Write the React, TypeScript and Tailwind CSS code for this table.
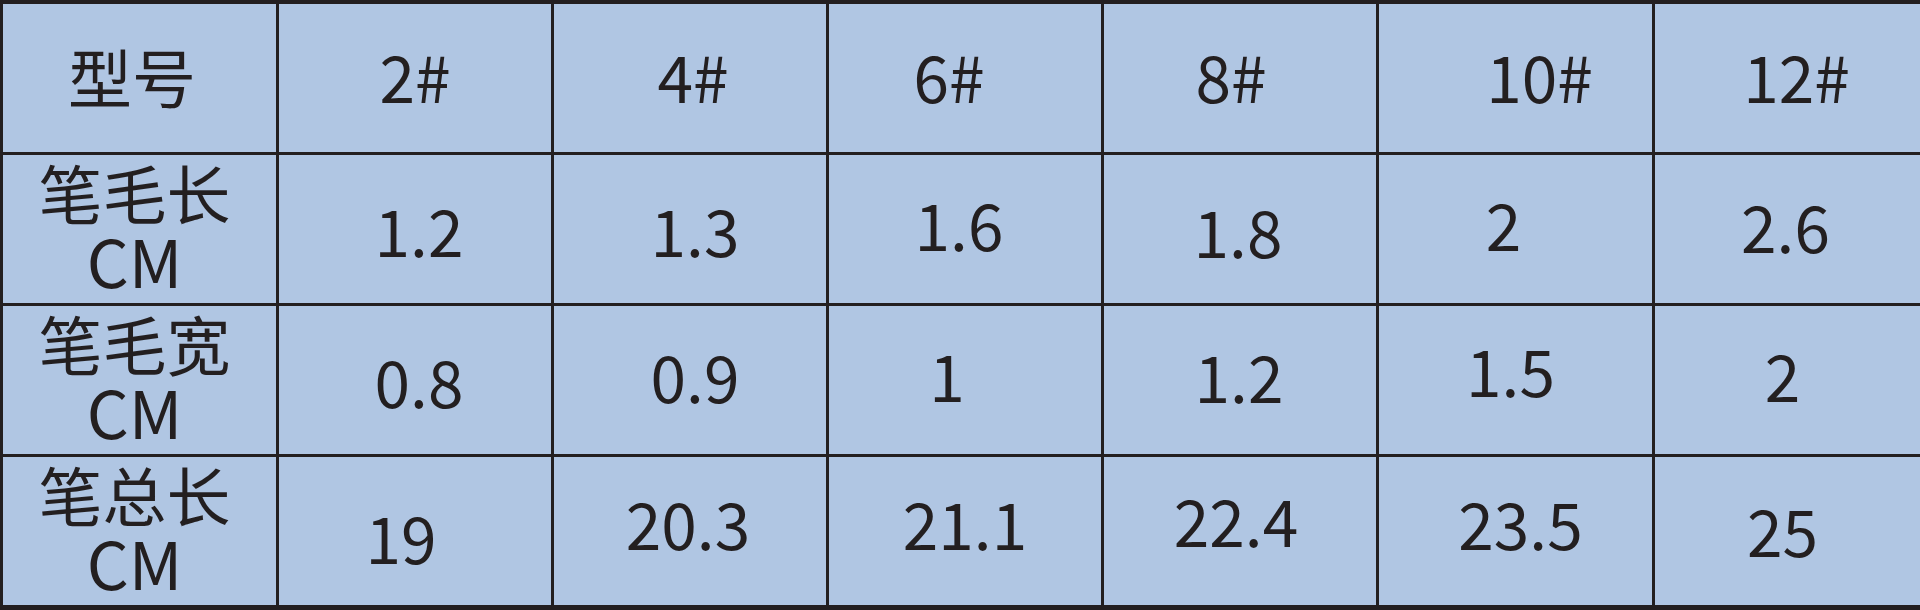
const font = "font-['Noto_Sans_CJK_SC','Noto_Sans',sans-serif]";

type Cell = { t: string; label?: boolean; c?: string };

// 每格文字在原图里并不完全居中，用 padding 微调
const rows: Cell[][] = [
  [
    { t: "型号", c: "pr-[15px] pb-[6px]" },
    { t: "2#", c: "pb-[6px]" },
    { t: "4#", c: "pl-[6px] pb-[6px]" },
    { t: "6#", c: "pr-[32px] pb-[6px]" },
    { t: "8#", c: "pr-[18px] pb-[6px]" },
    { t: "10#", c: "pl-[48px] pb-[6px]" },
    { t: "12#", c: "pl-[18px] pb-[6px]" },
  ],
  [
    { t: "笔毛长", label: true, c: "pr-[10px] pb-[8px]" },
    { t: "1.2", c: "pl-[8px]" },
    { t: "1.3", c: "pl-[10px]" },
    { t: "1.6", c: "pr-[12px] pb-[12px]" },
    { t: "1.8", c: "pr-[4px] pt-[2px]" },
    { t: "2", c: "pr-[24px] pb-[12px]" },
    { t: "2.6", c: "pr-[4px] pb-[8px]" },
  ],
  [
    { t: "笔毛宽", label: true, c: "pr-[10px] pb-[8px]" },
    { t: "0.8", c: "pl-[8px]" },
    { t: "0.9", c: "pl-[10px] pb-[10px]" },
    { t: "1", c: "pr-[36px] pb-[12px]" },
    { t: "1.2", c: "pr-[2px] pb-[10px]" },
    { t: "1.5", c: "pr-[10px] pb-[22px]" },
    { t: "2", c: "pr-[10px] pb-[12px]" },
  ],
  [
    { t: "笔总长", label: true, c: "pr-[10px] pb-[8px]" },
    { t: "19", c: "pr-[28px] pt-[10px]" },
    { t: "20.3", c: "pr-[4px] pb-[18px]" },
    { t: "21.1", c: "pb-[18px]" },
    { t: "22.4", c: "pr-[8px] pb-[24px]" },
    { t: "23.5", c: "pl-[10px] pb-[18px]" },
    { t: "25", c: "pr-[10px] pb-[4px]" },
  ],
];

export default function App() {
  return (
    <div className={`w-[1920px] h-[610px] bg-[#231f20] pt-[4px] pb-[5px] pl-[3px] ${font}`}>
      <div className="grid h-full grid-cols-[273px_272px_272px_272px_272px_273px_1fr] grid-rows-4 gap-[3px]">
        {rows.map((row, i) =>
          row.map((cell, j) => (
            <div
              key={`${i}-${j}`}
              className={`flex flex-col items-center justify-center bg-[#b0c6e3] text-[#231f20] text-[64px] leading-[68px] text-center ${cell.c ?? ""}`}
            >
              {cell.label ? (
                <>
                  <span className="block h-[68px] leading-[68px]">{cell.t}</span>
                  <span className="block h-[68px] text-[66px] leading-[68px]">CM</span>
                </>
              ) : (
                cell.t
              )}
            </div>
          ))
        )}
      </div>
    </div>
  );
}
